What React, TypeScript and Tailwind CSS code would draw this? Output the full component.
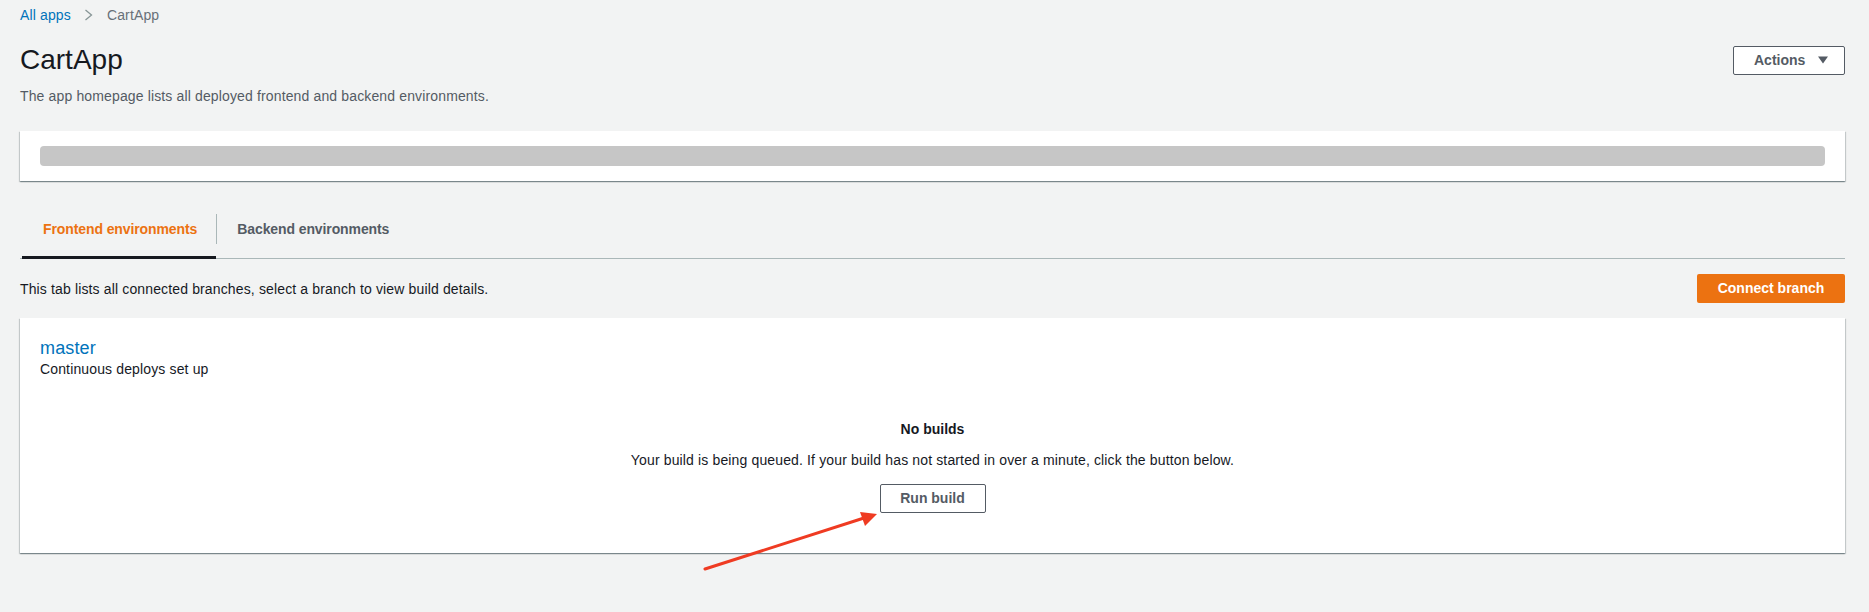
import React from 'react';

const font = { fontFamily: '"Liberation Sans", Arial, sans-serif' };

const cardShadow =
  'shadow-[0_1px_1px_0_rgba(0,28,36,0.3),1px_1px_1px_0_rgba(0,28,36,0.15),-1px_1px_1px_0_rgba(0,28,36,0.15)]';

// Red annotation arrow pointing at the Run build button
const Arrow = () => (
  <svg
    className="pointer-events-none absolute left-0 top-0"
    width="1869"
    height="612"
    viewBox="0 0 1869 612"
  >
    <line x1="705" y1="569" x2="864" y2="518" stroke="#ef3b22" strokeWidth="3" strokeLinecap="round" />
    <polygon points="877,514 860,512 865,526" fill="#ef3b22" />
  </svg>
);

const App = () => {
  return (
    <div
      className="relative min-h-[612px] bg-[#f2f3f3] pl-[20px] pr-[24px] pt-[5px] text-[14px] tracking-[0.14px] text-[#16191f]"
      style={font}
    >
      {/* breadcrumb */}
      <nav className="flex h-5 items-center leading-5">
        <span className="text-[#0073bb]">All apps</span>
        <svg className="ml-[13px] mr-[14px]" width="9" height="12" viewBox="0 0 9 12">
          <polyline points="1.5,1 7.5,6 1.5,11" fill="none" stroke="#879596" strokeWidth="1.3" />
        </svg>
        <span className="text-[#687078]">CartApp</span>
      </nav>

      {/* header */}
      <div className="mt-[17px] flex h-9 items-center justify-between">
        <h1 className="text-[28px] leading-9 font-normal tracking-normal">CartApp</h1>
        <button className="flex h-[29px] w-[112px] items-center rounded-[2px] border border-[#545b64] bg-white pl-[20px] font-bold tracking-normal text-[#545b64]">
          Actions
          <svg className="ml-[13px]" width="10" height="8" viewBox="0 0 10 8">
            <polygon points="0,0.5 10,0.5 5,7.5" fill="#545b64" />
          </svg>
        </button>
      </div>
      <p className="mt-[8px] leading-5 text-[#545b64]">
        The app homepage lists all deployed frontend and backend environments.
      </p>

      {/* loading card */}
      <div className={`mt-[25px] bg-white px-[20px] pb-[15px] pt-[15px] ${cardShadow}`}>
        <div className="h-[20px] rounded-[4px] bg-[#c6c6c6]" />
      </div>

      {/* tabs */}
      <div className="mt-[21px] flex border-b border-[#aab7b8]">
        <button className="-mb-px ml-[2px] flex h-[57px] items-center border-b-[3px] border-[#16191f] pl-[21px] pr-[19px] font-bold tracking-[-0.1px] text-[#ec7211]">
          Frontend environments
        </button>
        <div className="h-[57px] -mb-px flex items-center pb-[3px]">
          <div className="h-[30px] w-px bg-[#aab7b8]" />
        </div>
        <button className="-mb-px flex h-[57px] items-center border-b-[3px] border-transparent pl-[20px] pr-[20px] font-bold tracking-[-0.1px] text-[#545b64]">
          Backend environments
        </button>
      </div>

      <div className="mt-[15px] flex items-center justify-between">
        <p className="leading-5">
          This tab lists all connected branches, select a branch to view build details.
        </p>
        <button className="flex h-[29px] w-[148px] items-center justify-center rounded-[2px] bg-[#ec7211] font-bold tracking-normal text-white">
          Connect branch
        </button>
      </div>

      {/* branch card */}
      <div className={`mt-[15px] bg-white px-[20px] pb-[40px] pt-[19px] ${cardShadow}`}>
        <div className="text-[18px] leading-[22px] text-[#0073bb]">master</div>
        <div className="leading-5">Continuous deploys set up</div>
        <div className="mt-[40px] flex flex-col items-center">
          <div className="font-bold leading-5 tracking-normal">No builds</div>
          <p className="mt-[11px] leading-5">
            Your build is being queued. If your build has not started in over a minute, click the button below.
          </p>
          <button className="mt-[14px] flex h-[29px] w-[106px] items-center justify-center rounded-[2px] border border-[#545b64] bg-white font-bold tracking-normal text-[#545b64]">
            Run build
          </button>
        </div>
      </div>

      <Arrow />
    </div>
  );
};

export default App;
